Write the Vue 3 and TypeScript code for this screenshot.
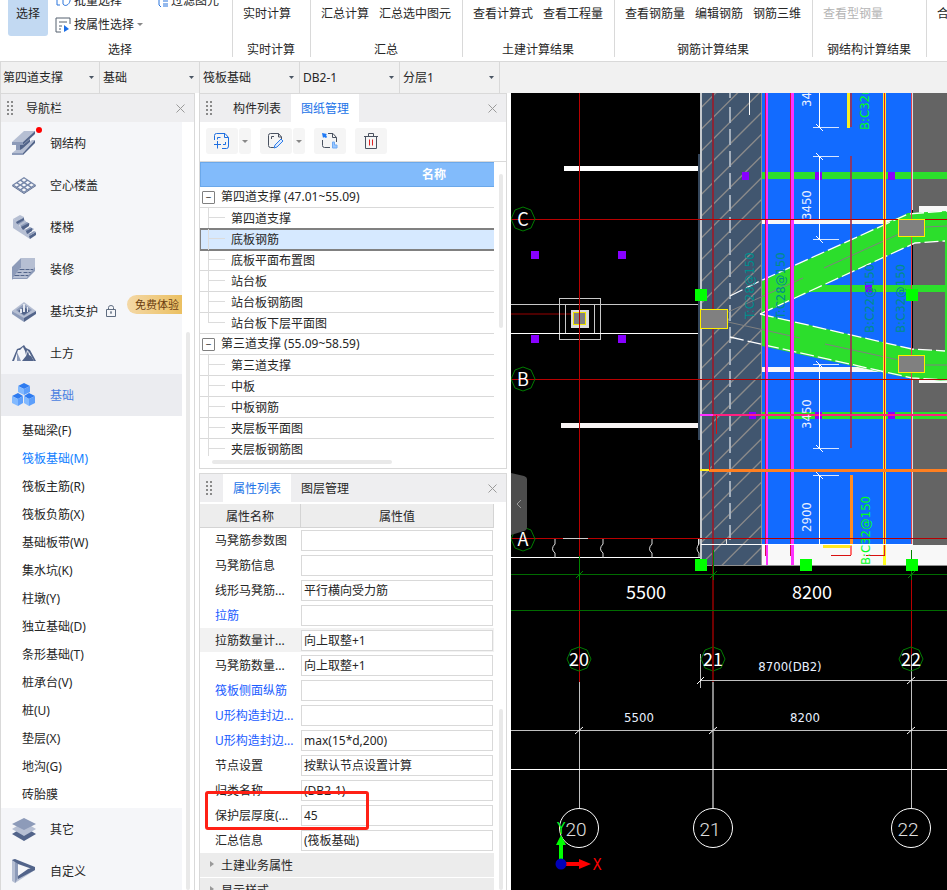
<script setup lang="ts">
import { ref } from 'vue'

type Shape = [fill: string, d: string]
interface NavItem { name: string; icon: Shape[]; dot?: boolean; locked?: boolean; badge?: string; active?: boolean }
interface Prop { name: string; value: string; blue?: boolean; shaded?: boolean }
type Seg = [x1: number, y1: number, x2: number, y2: number]
type Box = [x: number, y: number, w: number, h: number]

const L = '#b6bfd3'
const M = '#8d9bb9'
const D = '#52648a'

const toolGroups = [
  { title: '实时计算', tools: ['实时计算'], size: 'mid' },
  { title: '汇总', tools: ['汇总计算', '汇总选中图元'], size: '' },
  { title: '土建计算结果', tools: ['查看计算式', '查看工程量'], size: '' },
  { title: '钢筋计算结果', tools: ['查看钢筋量', '编辑钢筋', '钢筋三维'], size: '' },
  { title: '钢结构计算结果', tools: ['查看型钢量'], size: 'wide', disabled: true },
  { title: '', tools: ['合'], size: '' },
]

const filters = [
  { label: '楼层', value: '第四道支撑' },
  { label: '构件大类', value: '基础' },
  { label: '构件类型', value: '筏板基础' },
  { label: '构件', value: 'DB2-1' },
  { label: '分层', value: '分层1' },
]

/* Openings of the hollow slab: a 3 x 3 grid of small rhombs */
const openings = [0, 1, 2].flatMap(i => [0, 1, 2].map(j => {
  const cx = 12 + (i - j) * 3.7
  const cy = 7.1 + (i + j) * 2.45
  return `M${cx - 2.4} ${cy}L${cx} ${cy - 1.6}L${cx + 2.4} ${cy}L${cx} ${cy + 1.6}z`
})).join('')

const navTop: NavItem[] = [
  { name: '钢结构', dot: true, icon: [
    [L, 'M12 0H23L11 11H0z'], [M, 'M0 11H11V14H0z'], [D, 'M11 11L23 0V3L11 14z'], [M, 'M4 14H8V20H4z'],
    [D, 'M8 14H11L18 8V12L8 20z'], [L, 'M10 18L20 9H23L11 22H0L4 19H8z'], [M, 'M0 22H11V24H0z'], [D, 'M11 22L23 9V12L11 24z'] ] },
  { name: '空心楼盖', icon: [
    [D, 'M0 12L12 20L24 12V13L12 21L0 13z'], ['#7485a8', 'M12 4L24 12L12 20L0 12z'], ['#f5f6f9', openings] ] },
  { name: '楼梯', icon: [
    [L, 'M1 4L6 6L8 12L13 14L18 19V24L1 13z'], [L, 'M1 4L8 0L12 2L5 6zM5 8L12 4L16 9L10 12z'], [M, 'M5 6L12 2V6L6 10zM8 11L15 7L18 9L11 14zM13 15L18 12L22 14L16 19z'],
    [D, 'M4 7L12 3V5L5 9zM9 12L17 8V11L11 15zM14 16L20 13V16L15 19zM17 21L24 17V20L18 24z'], [M, 'M17 19L22 16L24 17L17 21z'] ] },
  { name: '装修', icon: [
    [M, 'M0 10L9 1V12L0 23z'], [L, 'M9 1H23V12H9z'], [L, 'M8 11H23L15 22H0z'],
    [D, 'M8 12H13L12 13H7zM14 12H18L17 13H13zM19 12H22L21 13H18zM6 15H10L9 16H5zM12 15H16L15 16H11zM17 15H20L19 16H16zM3 18H8L7 19H2zM9 18H13L12 19H8zM14 18H18L17 19H13z'], [M, 'M15 20L23 10V14L15 22zM0 21H15V22H0z'] ] },
  { name: '基坑支护', locked: true, badge: '免费体验', icon: [
    [L, 'M12 3L24 12L12 20L0 12z'], [M, 'M12 5L20 11L12 17L4 11z'], [D, 'M6 12L12 8L18 12L12 16z'], [M, 'M0 12L12 19V23L0 15z'], [D, 'M24 12L12 19V23L24 15z'],
    ['#e4e8f0', 'M11 5H13V13H11zM15 8H16V13H15zM8 10H10V14H8z'] ] },
  { name: '土方', icon: [
    [D, 'M0 20L5 8L8 7L12 4L14 7L18 9L24 20H22L17 11L15 9L14 14L13 10L11 6L8 9L6 9L2 20z'], [M, 'M5 11L9 20H5z'], [D, 'M16 10L17 14L19 15L22 20H10L14 15z'] ] },
  { name: '基础', active: true, icon: [
    ['#2e7bf0', 'M12 0L18 3L12 6L6 3z'], ['#82b9ff', 'M6 3L12 6V12L6 9z'], ['#5d9ffb', 'M18 3L12 6V12L18 9z'],
    ['#2e7bf0', 'M6 10L11 13L6 16L0 13zM17 10L23 13L17 16L12 13z'], ['#82b9ff', 'M0 13L6 16V23L0 20zM12 13L17 16V23L12 20z'], ['#5d9ffb', 'M11 13L6 16V23L11 20zM23 13L17 16V23L23 20z'] ] },
]
const navBottom: NavItem[] = [
  { name: '其它', icon: [
    [D, 'M0 17L5 14H19L24 17L12 24z'], [L, 'M0 12L5 9H19L24 12L12 19z'], [M, 'M12 1L24 7L12 13L0 7z'] ] },
  { name: '自定义', icon: [
    [L, 'M0 1L3 0L6 3V17L23 8V11L3 24L0 22z'], [M, 'M3 3L6 5V19L3 24z'], [D, 'M0 1L3 0L23 8V11L6 5zM6 17L16 10L20 9L23 11L6 20z'] ] },
]
const subItems = ['基础梁(F)', '筏板基础(M)', '筏板主筋(R)', '筏板负筋(X)', '基础板带(W)', '集水坑(K)', '柱墩(Y)', '独立基础(D)', '条形基础(T)', '桩承台(V)', '桩(U)', '垫层(X)', '地沟(G)', '砖胎膜']
const currentSub = ref('筏板基础(M)')

const drawings = [
  { name: '第四道支撑 (47.01~55.09)', children: ['第四道支撑', '底板钢筋', '底板平面布置图', '站台板', '站台板钢筋图', '站台板下层平面图'] },
  { name: '第三道支撑 (55.09~58.59)', children: ['第三道支撑', '中板', '中板钢筋', '夹层板平面图', '夹层板钢筋图'] },
]
const currentDrawing = ref('底板钢筋')

const props = ref<Prop[]>([
  { name: '马凳筋参数图', value: '' },
  { name: '马凳筋信息', value: '' },
  { name: '线形马凳筋...', value: '平行横向受力筋' },
  { name: '拉筋', value: '', blue: true },
  { name: '拉筋数量计...', value: '向上取整+1', shaded: true },
  { name: '马凳筋数量...', value: '向上取整+1' },
  { name: '筏板侧面纵筋', value: '', blue: true },
  { name: 'U形构造封边...', value: '', blue: true },
  { name: 'U形构造封边...', value: 'max(15*d,200)', blue: true },
  { name: '节点设置', value: '按默认节点设置计算' },
  { name: '归类名称', value: '(DB2-1)' },
  { name: '保护层厚度(...', value: '45' },
  { name: '汇总信息', value: '(筏板基础)' },
])
const propGroups = ['土建业务属性', '显示样式']

/* Plan geometry, in drawing units */
const hatch: Seg[] = Array.from({ length: 26 }, (_, i) => {
  const y = 86 + i * 21.75
  return [701, y, 762, y - 61]
})
const purple: Box[] = [[531, 251, 8, 8], [618, 251, 8, 8], [531, 335, 8, 8], [618, 335, 8, 8]]
const purpleOver: Box[] = [[742, 172, 7, 8], [815, 172, 7, 8], [888, 172, 7, 8], [785, 285, 7, 7], [865, 285, 7, 7], [945, 285, 7, 7], [749, 412, 7, 7], [815, 412, 7, 7], [888, 412, 7, 7]]
const columns: Box[] = [[700, 309, 28, 20], [898, 219, 27, 18], [898, 355, 27, 18]]
const handles: Box[] = [[695, 289, 12, 12], [906, 289, 12, 12], [695, 559, 12, 12], [800, 559, 12, 12], [906, 559, 12, 12]]
const dimRuns: Seg[] = [[819, 93, 819, 127], [819, 156, 819, 239], [819, 364, 819, 448], [819, 475, 819, 545]]
const dimTicks = [127, 156, 239, 364, 448, 475]
const vertDims = [{ x: 811, y: 107, t: '34' }, { x: 811, y: 220, t: '3450' }, { x: 811, y: 429, t: '3450' }, { x: 811, y: 532, t: '2900' }]
const rebar = [
  { x: 869, y: 130, t: 'B:C32@150', c: 'lime' },
  { x: 870, y: 565, t: 'B:C32@150', c: 'lime' },
  { x: 754, y: 319, t: 'T:C28@150', c: 'teal' },
  { x: 785, y: 319, t: 'T:C28@150', c: 'teal' },
  { x: 874, y: 333, t: 'B:C22@150', c: 'teal' },
  { x: 905, y: 333, t: 'B:C32@150', c: 'teal' },
]
const rowAxes = [{ y: 219, t: 'C' }, { y: 379, t: 'B' }, { y: 539, t: 'A' }]
const colAxes = [{ x: 579, t: '20' }, { x: 713, t: '21' }, { x: 911, t: '22' }]
function octagon(cx: number, cy: number): string {
  return [[0, -12], [8, -9], [12, 0], [8, 9], [0, 12], [-8, 9], [-12, 0], [-8, -9]].map(([x, y]) => `${cx + x},${cy + y}`).join(' ')
}
</script>

<template>
  <div class="app">
    <header class="ribbon">
      <section class="group select-group">
        <div class="tools">
          <button class="big chosen">选择</button>
          <div class="small-tools">
            <button class="small">
              <svg width="16" height="16" viewBox="0 0 16 16" fill="none" stroke="#2b74dc"><path d="M8 3H2V12H5M8 3C12 1 16 4 15 8S10 14 8 11V7" /></svg>批量选择
            </button>
            <button class="small">
              <svg width="16" height="16" viewBox="0 0 16 16" fill="none" stroke="#55606e"><path d="M15 7V1H1V15H6M4 5H12M4 9H7M4 12H6" /><path d="M9 8L14 12L9 15z" fill="#1c6fe8" stroke="none" /></svg>按属性选择<i class="caret"></i>
            </button>
          </div>
          <div class="small-tools second">
            <button class="small">
              <svg width="10" height="16" viewBox="0 0 10 16" fill="none" stroke="#2b74dc"><path d="M1 2V12L3 14M5 5H10M5 8H10M5 11H10M5 13H10" /></svg>过滤图元
            </button>
            <span class="small"></span>
          </div>
        </div>
        <div class="title">选择</div>
      </section>
      <section v-for="g in toolGroups" :key="g.title" class="group" :class="g.size">
        <div class="tools">
          <button v-for="t in g.tools" :key="t" class="big" :disabled="g.disabled">{{ t }}</button>
        </div>
        <div class="title">{{ g.title }}</div>
      </section>
    </header>

    <div class="filters">
      <div v-for="f in filters" :key="f.label" class="filter">
        <select :aria-label="f.label"><option>{{ f.value }}</option></select>
        <svg class="arrow" width="5" height="3" viewBox="0 0 5 3"><path d="M0 0H5L2.500 3z" fill="#4a5563" /></svg>
      </div>
    </div>

    <main class="work">
      <nav class="panel nav">
        <div class="head">
          <svg class="grip" width="6" height="14"><path d="M0 1H2M4 1H6M0 5H2M4 5H6M0 9H2M4 9H6M0 13H2M4 13H6" stroke="#8a8a8a" stroke-width="2" /></svg>
          <span class="caption">导航栏</span>
          <button class="close" aria-label="关闭"><svg width="9" height="9" viewBox="0 0 9 9"><path d="M.5 .5L8.500 8.500M8.500 .5L.5 8.500" stroke="#9a9a9a" /></svg></button>
        </div>
        <div class="nav-body">
          <div class="nav-list">
            <a v-for="n in navTop" :key="n.name" href="#" class="nav-item" :class="{ active: n.active }">
              <svg width="24" height="24" viewBox="0 0 24 24"><path v-for="(s, i) in n.icon" :key="i" :fill="s[0]" :d="s[1]" /></svg>
              <i v-if="n.dot" class="dot"></i>
              <span>{{ n.name }}</span>
              <svg v-if="n.locked" class="lock" width="10" height="12" viewBox="0 0 10 12" fill="none" stroke="#5f6c80"><path d="M.5 4.500H9.500V11.500H.5zM2.500 4.500V2.500Q2.500 .5 5 .5T7.500 2.500V4.500M4 7H6M5 7V9" /></svg>
              <em v-if="n.badge" class="badge">{{ n.badge }}</em>
            </a>
            <a v-for="s in subItems" :key="s" href="#" class="sub-item" :class="{ current: s === currentSub }" @click.prevent="currentSub = s">{{ s }}</a>
            <a v-for="n in navBottom" :key="n.name" href="#" class="nav-item">
              <svg width="24" height="24" viewBox="0 0 24 24"><path v-for="(s, i) in n.icon" :key="i" :fill="s[0]" :d="s[1]" /></svg>
              <span>{{ n.name }}</span>
            </a>
          </div>
          <i class="thumb nav-thumb"></i>
        </div>
      </nav>

      <div class="docks">
        <section class="panel drawings">
          <div class="head">
            <svg class="grip" width="6" height="14"><path d="M0 1H2M4 1H6M0 5H2M4 5H6M0 9H2M4 9H6M0 13H2M4 13H6" stroke="#8a8a8a" stroke-width="2" /></svg>
            <button class="tab">构件列表</button>
            <button class="tab on">图纸管理</button>
            <button class="close" aria-label="关闭"><svg width="9" height="9" viewBox="0 0 9 9"><path d="M.5 .5L8.500 8.500M8.500 .5L.5 8.500" stroke="#9a9a9a" /></svg></button>
          </div>
          <div class="toolbar">
            <div class="split">
              <button class="tool" aria-label="添加图纸"><svg width="16" height="16" viewBox="0 0 16 16" fill="none" stroke="#1f6fe0"><path d="M.5 7V2.500Q.5 .5 2.500 .5H11L14.500 4.500V13Q14.500 15.500 12.500 15.500H8M10.500 .5V4.500H14.500M3.500 6.500V4.500H6.500M11.500 9V11.500H9M3.500 8V15.500M0 11.500H7" /></svg></button>
              <button class="drop" aria-label="更多"><i class="caret"></i></button>
            </div>
            <div class="split">
              <button class="tool" aria-label="编辑图纸"><svg width="16" height="16" viewBox="0 0 16 16" fill="none" stroke="#4a5260"><path d="M6 14.500H2.500Q.5 14.500 .5 12.500V2.500Q.5 .5 2.500 .5H10.500L13.500 4V6M10.500 .5V4H13.500M3.500 6V3.500H6" /><path d="M7 12L13 6L15 8L9 14L6 15z" stroke="#2f7de8" fill="#dceaff" /></svg></button>
              <button class="drop" aria-label="更多"><i class="caret"></i></button>
            </div>
            <button class="tool" aria-label="定位图纸"><svg width="16" height="16" viewBox="0 0 16 16" fill="none" stroke="#4a5260"><path d="M.5 7V12.500Q.5 14.500 2.500 14.500H8M6 .5H11L14.500 4.500V9M10.500 .5V4.500H14.500" /><path d="M0 0L5 1L4 2L5 4L4 5L2 4L1 5z" fill="#1f7af5" stroke="none" /><path d="M10.500 9V15H15V12H12.500V9z" fill="#9cc8ff" stroke="#6fabf5" /></svg></button>
            <button class="tool" aria-label="删除"><svg width="14" height="16" viewBox="0 0 14 16" fill="none" stroke="#4a5260"><path d="M0 3.500H14M4.500 3V.5H9.500V3M1.500 4V15.500H12.500V4" /><path d="M5.500 6.500V12.500M8.500 6.500V12.500" stroke="#e02222" /></svg></button>
          </div>
          <div class="tree-area">
            <div class="tree-clip">
              <div class="tree-head"><span>名称</span></div>
              <ul class="tree">
                <li v-for="d in drawings" :key="d.name">
                  <div class="row root"><button class="fold" aria-label="折叠">−</button>{{ d.name }}</div>
                  <ul>
                    <li v-for="c in d.children" :key="c" class="row leaf" :class="{ picked: c === currentDrawing }" @click="currentDrawing = c">{{ c }}</li>
                  </ul>
                </li>
              </ul>
            </div>
            <i class="thumb tree-thumb"></i>
          </div>
          <i class="h-thumb"></i>
        </section>

        <section class="panel props">
          <div class="head">
            <svg class="grip" width="6" height="14"><path d="M0 1H2M4 1H6M0 5H2M4 5H6M0 9H2M4 9H6M0 13H2M4 13H6" stroke="#8a8a8a" stroke-width="2" /></svg>
            <button class="tab on">属性列表</button>
            <button class="tab">图层管理</button>
            <button class="close" aria-label="关闭"><svg width="9" height="9" viewBox="0 0 9 9"><path d="M.5 .5L8.500 8.500M8.500 .5L.5 8.500" stroke="#9a9a9a" /></svg></button>
          </div>
          <div class="prop-area">
            <table>
              <colgroup><col class="name-col"><col></colgroup>
              <thead><tr><th>属性名称</th><th>属性值</th></tr></thead>
              <tbody>
                <tr v-for="(p, i) in props" :key="i" :class="{ shaded: p.shaded, blue: p.blue }">
                  <td><label :for="`prop-${i}`">{{ p.name }}</label></td>
                  <td><input :id="`prop-${i}`" v-model="p.value" type="text"></td>
                </tr>
                <tr v-for="g in propGroups" :key="g" class="fold-row">
                  <td colspan="2"><svg width="4" height="6" viewBox="0 0 4 6"><path d="M0 0L4 3L0 6z" fill="#999" /></svg>{{ g }}</td>
                </tr>
              </tbody>
            </table>
            <i class="thumb prop-thumb"></i>
            <i class="marker"></i>
          </div>
        </section>
      </div>

      <div class="viewport">
        <svg class="plan" viewBox="511 93 436 797" preserveAspectRatio="xMinYMin slice">
          <rect x="511" y="93" width="436" height="797" fill="#000" />
          <g shape-rendering="crispEdges">
            <rect x="564" y="166" width="136" height="5" fill="#fff" />
            <rect x="561" y="423" width="138" height="5" fill="#f8f4f4" />
            <rect v-for="(b, i) in purple" :key="i" :x="b[0]" :y="b[1]" :width="b[2]" :height="b[3]" fill="#8800ff" />
            <path d="M511 314H571" stroke="#4c0000" stroke-width="2" />
            <path d="M511 304.500H700M559.500 298.500H600.500V339.500H559.500zM565.500 304V333M594.500 304V333" stroke="#c8c8c8" fill="none" />
            <path d="M511 333.500H700M511 557.500H700" stroke="#fff" />
            <rect x="571" y="310" width="18" height="18" fill="#ddd" />
            <rect x="573.500" y="312.500" width="12" height="12" fill="#808080" stroke="#f0e600" />

            <rect x="698" y="154" width="3" height="286" fill="#34465b" />
            <rect x="701" y="93" width="61" height="472" fill="#41566f" />
            <rect x="762" y="93" width="150" height="452" fill="#126bff" />
            <rect x="913" y="93" width="34" height="452" fill="#646464" />
            <rect x="762" y="545" width="185" height="20" fill="#f8f8f8" />
          </g>
          <path v-for="(h, i) in hatch" :key="i" :d="`M${h[0]} ${h[1]}L${h[2]} ${h[3]}`" stroke="#8a8a8a" stroke-width="1.300" clip-path="url(#wallClip)" />
          <clipPath id="wallClip"><rect x="701" y="93" width="61" height="472" /></clipPath>
          <g shape-rendering="crispEdges">
            <path d="M701 93V565" stroke="#c4c8cc" stroke-width="2" />
            <path d="M761.500 93V565M701 565.500H947" stroke="#909090" />
            <path d="M713 93V565" stroke="#8a2536" stroke-width="2" />
            <path d="M730 107V540M730 93V98" stroke="#a4afbc" stroke-width="2" stroke-dasharray="16 6" />
            <path d="M749.500 93V115" stroke="#fff" />
            <rect x="762" y="172" width="185" height="7" fill="#2cde2c" />
            <rect x="762" y="285" width="185" height="7" fill="#2cde2c" />
            <rect x="762" y="412" width="185" height="7" fill="#2cde2c" />
            <rect x="762" y="220" width="150" height="4" fill="#f8f8f8" />
            <rect x="762" y="367" width="118" height="5" fill="#f8f8f8" />
            <rect x="919" y="206" width="28" height="7" fill="#f8f8f8" />
            <rect x="919" y="378" width="28" height="5" fill="#f8f8f8" />
            <rect v-for="(b, i) in purpleOver" :key="i" :x="b[0]" :y="b[1]" :width="b[2]" :height="b[3]" fill="#8800ff" />
          </g>
          <path d="M762 281L908 213L947 211V241L915 243L762 314z" fill="#2cde2c" />
          <path d="M762 314L912 349L947 351V381L908 378L762 346z" fill="#2cde2c" />
          <path d="M946 240V352" stroke="#2cde2c" stroke-width="2" />
          <path d="M728 312L803 278M824 268L899 234M728 322L800 338M825 344L899 360M925 227L947 226M925 365H947" stroke="#808080" fill="none" />
          <path d="M730 296L758 282L908 214L947 211M760 314L915 243L945 241M760 314L912 349L945 351M730 337L765 345L912 378L947 380" stroke="#fff" stroke-width="1.300" fill="none" stroke-dasharray="14 4" />

          <g shape-rendering="crispEdges">
            <path d="M911.500 93V545" stroke="#e04050" />
            <path d="M912.500 93V210M912.500 380V545" stroke="#ddd" />
            <path d="M765.500 93V556" stroke="#d0104a" />
            <path d="M767 93V565" stroke="#ff30ff" stroke-width="2" />
            <path d="M790.500 93V556" stroke="#d0104a" />
            <path d="M792.500 93V565" stroke="#ff30ff" stroke-width="3" />
            <path d="M848.500 93V128" stroke="#f8f020" stroke-width="3" />
            <path d="M851 93V127M851 156V448" stroke="#a03050" stroke-opacity="0.850" stroke-width="2" />
            <path d="M884.500 93V556" stroke="#ffe92a" stroke-width="3" />
            <path d="M884.500 93V556" stroke="#e02020" />
            <path d="M884.500 556V565" stroke="#ffff20" stroke-width="3" />
            <path d="M700 415H713" stroke="#ff30ff" stroke-width="2" />
            <path d="M713 415H947" stroke="#ff1f80" stroke-width="2" />
            <path d="M700 470H709" stroke="#fff020" stroke-width="2" />
            <path d="M709 470.500H947" stroke="#ff7f20" stroke-width="3" />
            <path d="M851.500 475V545" stroke="#ff8c20" stroke-width="3" />
            <path d="M823 546.500H852" stroke="#ffe820" stroke-width="3" />
            <path d="M851 546V555" stroke="#ff7070" stroke-width="2" />
            <path d="M831 555.500H851M866 555.500H885M716.500 415V434M709.500 452V470" stroke="#d81010" fill="none" />
            <path d="M701 544.500H913" stroke="#fff" />
            <path d="M698.500 539V545M710 538.500H726V545" stroke="#e8e8e8" fill="none" />
            <path v-for="(r, i) in dimRuns" :key="i" :d="`M${r[0]}.5 ${r[1]}V${r[3]}`" stroke="#fff" />
            <path v-for="y in dimTicks" :key="y" :d="`M813 ${y}.5H839`" stroke="#d8e6ff" />
          </g>
          <path v-for="y in dimTicks" :key="y" :d="`M816 ${y - 3}L823 ${y + 4}`" stroke="#fff" />
          <text v-for="(v, i) in vertDims" :key="i" class="cad white" :transform="`translate(${v.x} ${v.y}) rotate(-90)`">{{ v.t }}</text>
          <text v-for="(r, i) in rebar" :key="i" class="cad" :class="r.c" :transform="`translate(${r.x} ${r.y}) rotate(-90)`">{{ r.t }}</text>

          <path d="M555 539V544Q550 549 555 553V558M603 539V544Q598 549 603 553V558M652 539V544Q647 549 652 553V558M699 539V544Q695 549 699 553V558" stroke="#ddd" fill="none" />

          <g shape-rendering="crispEdges">
            <path d="M511 219.500H947M511 379.500H947M511 538.500H947" stroke="#b80000" />
            <path d="M579.500 93V682M911.500 565V655" stroke="#b80000" />
            <path d="M713 565V682" stroke="#700000" stroke-width="2" />
            <path d="M563 538.500H588" stroke="#ccc" />
            <path d="M511 574.500H947M511 610.500H947" stroke="#006c00" />
            <path d="M579.500 556V580M713.500 550V580M911.500 550V580" stroke="#008400" />
            <path d="M579.500 682V808M911.500 655V808M701 680.500H947M700.500 654V688M511 730.500H947" stroke="#c0c0c0" />
            <path d="M713 682V808" stroke="#888" stroke-width="2" />
            <path d="M511 769.500H947" stroke="#fff" />
            <g fill="#808080" stroke="#fff000">
              <rect v-for="(b, i) in columns" :key="i" :x="b[0] + 0.5" :y="b[1] + 0.5" :width="b[2] - 1" :height="b[3] - 1" />
            </g>
            <rect v-for="(b, i) in handles" :key="i" :x="b[0]" :y="b[1]" :width="b[2]" :height="b[3]" fill="#00ff00" />
          </g>

          <g v-for="a in rowAxes" :key="a.t">
            <polygon :points="octagon(523, a.y)" fill="none" stroke="#007c00" />
            <text class="mark" x="523" :y="a.y + 7">{{ a.t }}</text>
          </g>
          <g v-for="a in colAxes" :key="a.t">
            <path :d="`M${a.x - 3} 578L${a.x + 4} 571`" stroke="#008400" />
            <path :d="`M${a.x - 4} 734L${a.x + 4} 727`" stroke="#fff" />
            <polygon :points="octagon(a.x, 659)" fill="none" stroke="#007c00" />
            <text class="mark" :x="a.x" y="666">{{ a.t }}</text>
            <circle :cx="a.x" cy="828" r="19.500" fill="none" stroke="#fff" />
            <text class="cad large" :x="a.x - 3" y="836">{{ a.t }}</text>
          </g>
          <path d="M713 647V671" stroke="#800000" stroke-width="2" />
          <path d="M697 684L704 677M907 684L915 677" stroke="#fff" />
          <text class="mark" x="646" y="599">5500</text>
          <text class="mark" x="812" y="599">8200</text>
          <text class="cad white mid" x="790" y="671">8700(DB2)</text>
          <text class="cad white mid" x="639" y="722">5500</text>
          <text class="cad white mid" x="805" y="722">8200</text>

          <path d="M559 859V845H556L561 835L566 845H563V859z" fill="#00ff00" />
          <path d="M566 862H579V859L591 864L579 869V866H566z" fill="#ff0000" />
          <circle cx="561" cy="864" r="5.500" fill="#0000b8" />
          <text class="cad lime mid axis" x="561" y="834">Y</text>
          <text class="cad red mid axis" x="597" y="870">X</text>
        </svg>
        <button class="collapse" aria-label="收起">
          <svg width="16" height="62" viewBox="0 0 16 62"><path d="M0 0L13 3Q16 4 16 6V54Q16 57 13 58L0 62z" fill="#4d4d4d" /><path d="M10 27L6 31L10 35" stroke="#9a9a9a" fill="none" /></svg>
        </button>
      </div>
    </main>
  </div>
</template>

<style>
body { margin: 0; overflow: hidden; }
</style>

<style scoped>
* { box-sizing: border-box; }
.app {
  display: flex; flex-direction: column; height: 100vh; overflow: hidden; background: #fff; color: #262626;
  font: 12px/16px "Noto Sans", "Noto Sans CJK SC", sans-serif;
}
button, select, input { font: inherit; color: inherit; border: 0; padding: 0; margin: 0; background: none; border-radius: 0; }
a { color: inherit; text-decoration: none; }
i, em { font-style: normal; }
svg { display: block; flex: none; }
ul { list-style: none; margin: 0; padding: 0; }
.caret { flex: none; border: 3px solid transparent; border-top-color: #888; border-bottom: 0; }

.ribbon { display: flex; align-items: flex-end; flex: none; height: 62px; padding-bottom: 4px; border-bottom: 1px solid #d9d9d9; overflow: hidden; white-space: nowrap; }
.group { flex: none; border-right: 1px solid #d9d9d9; padding: 0 11px 0 10px; }
.select-group { width: 233px; padding: 0 0 0 8px; }
.group.mid { min-width: 78px; }
.group.wide { min-width: 114px; }
.group:last-child { border-right: 0; }
.tools { display: flex; gap: 10px; height: 60px; }
.big { display: flex; align-items: flex-end; justify-content: center; padding-bottom: 14px; }
.big:disabled { color: #b4b4b4; }
.chosen { width: 40px; background: #c2d9f2; border-radius: 3px; }
.title { height: 21px; padding-top: 6px; text-align: center; }
.small-tools { display: flex; flex-direction: column; justify-content: flex-end; margin-left: -3px; }
.small-tools.second { margin-left: 5px; }
.small { display: flex; align-items: center; gap: 3px; height: 24px; padding-top: 1px; }

.filters { display: flex; flex: none; height: 31px; background: #f1f1f1; border-left: 1px solid #d9d9d9; }
.filter { position: relative; width: 100px; border-right: 1px solid #d9d9d9; }
.filter:first-child { width: 99px; }
.filter select { appearance: none; width: 100%; height: 100%; padding-left: 3px; outline: 0; }
.filter:first-child select { padding-left: 2px; }
.arrow { position: absolute; right: 5px; top: 14px; pointer-events: none; }

.work { display: flex; flex: 1; min-height: 0; }
.panel { border: 1px solid #d9d9d9; background: #fff; display: flex; flex-direction: column; }
.nav { flex: none; width: 195px; border-bottom: 0; }
.head { display: flex; align-items: center; flex: none; height: 28px; background: #eeeef0; padding-left: 6px; }
.caption { margin-left: 13px; padding-top: 2px; }
.close { margin-left: auto; margin-right: 9px; }
.tab { height: 28px; padding: 2px 10px 0; }
.grip + .tab { margin-left: 11px; }
.tab.on { background: #fff; color: #1a73e8; }

.nav-body { position: relative; flex: 1; min-height: 0; overflow: hidden; }
.nav-list { margin-right: 12px; }
.nav-item { position: relative; display: flex; align-items: center; height: 42px; padding-left: 11px; background: #f5f6f9; }
.nav-item span { margin-left: 14px; padding-top: 2px; }
.nav-item.active { background: #ebecf0; color: #4a7fe0; }
.dot { position: absolute; left: 35px; top: 5px; width: 6px; height: 6px; border-radius: 50%; background: #f00; }
.lock { margin-left: 8px; }
.badge { position: absolute; right: 0; top: 5px; height: 19px; padding: 1px 3px 0 8px; border-radius: 10px 0 0 10px; background: linear-gradient(90deg, #f4d8a6, #ebc062); color: #6b3d10; font-size: 11px; line-height: 18px; }
.sub-item { display: flex; align-items: center; height: 28px; padding: 2px 0 0 21px; }
.sub-item.current { color: #0f80ff; }
.thumb { position: absolute; width: 4px; border-radius: 2px; background: #e9e9e9; }
.nav-thumb { right: 4px; top: 210px; bottom: 0; }

.docks { display: flex; flex-direction: column; flex: none; width: 308px; margin: 0 4px; gap: 4px; }
.drawings { flex: none; }
.toolbar { display: flex; gap: 9px; padding: 6px; height: 40px; border-bottom: 1px solid #d9d9d9; }
.split { display: flex; gap: 1px; }
.tool, .drop { display: flex; align-items: center; justify-content: center; height: 26px; background: #f5f5f5; border-radius: 3px; }
.tool { width: 32px; padding-right: 1px; }
.drop { width: 12px; }
.tree-area { position: relative; height: 294px; }
.tree-clip { height: 294px; margin-right: 12px; overflow: hidden; }
.tree-head { height: 25px; border: 1px solid #6ba8ea; border-right: 0; background: #82bbfb; color: #fff; font-weight: 700; line-height: 24px; }
.tree-head span { display: block; width: 466px; text-align: center; }
.row { position: relative; height: 21px; line-height: 22px; border-bottom: 1px solid #d9d9d9; }
.root { display: flex; align-items: center; gap: 6px; padding-left: 2px; }
.fold { width: 13px; height: 13px; border: 1px solid #808080; border-radius: 1px; font-size: 10px; line-height: 10px; background: #fff; }
.leaf { padding-left: 31px; }
.leaf::before { content: ""; position: absolute; left: 8px; top: 0; bottom: -1px; border-left: 1px solid #dcdcdc; }
.leaf:last-child::before { bottom: 10px; }
.tree > li:last-child .leaf:last-child::before { bottom: 0; }
.leaf::after { content: ""; position: absolute; left: 8px; width: 17px; top: 9px; border-top: 1px solid #dcdcdc; }
.picked { z-index: 1; background: #d6e9ff; border-color: #808080; box-shadow: 0 -1px #808080, 0 1px #808080, inset 0 1px #808080, inset 1px 0 #808080; }
.tree-thumb { right: 3px; top: 12px; height: 154px; }
.h-thumb { width: 180px; height: 4px; margin: 4px 0 4px 12px; border-radius: 2px; background: #e9e9e9; }

.props { flex: 1; min-height: 0; border-bottom: 0; }
.prop-area { position: relative; flex: 1; min-height: 0; margin-top: 2px; margin-right: 12px; }
table { width: 100%; table-layout: fixed; border-collapse: separate; border-spacing: 0; }
.name-col { width: 101px; }
th { height: 24px; padding: 2px 0 0; background: #ededed; border: solid #d4d4d4; border-width: 0 1px 1px 0; font-weight: 400; }
td { height: 25px; padding: 0; border-bottom: 1px solid #fff; white-space: nowrap; }
td label { display: block; padding: 2px 0 0 15px; }
.blue label { color: #1a5cff; }
.shaded td { background: #f2f2f2; }
td input { display: block; width: calc(100% - 1px); height: 21px; padding: 0 2px; border: 1px solid #d9d9d9; background: #fff; outline: 0; }
.fold-row td { background: #ececec; padding: 2px 0 0 10px; }
.fold-row svg { display: inline-block; margin-right: 7px; vertical-align: 3px; }
.prop-thumb { right: -9px; top: 205px; bottom: 0; }
.marker { position: absolute; left: 5px; top: 287px; width: 164px; height: 39px; border: 3px solid #ff2015; border-radius: 3px; pointer-events: none; }

.viewport { position: relative; flex: 1; min-width: 0; overflow: hidden; background: #000; }
.plan { width: 100%; height: 100%; }
.collapse { position: absolute; left: 0; top: 380px; }
.cad { font: 13px "Liberation Sans Narrow", "DejaVu Sans Condensed", sans-serif; }
.mid { text-anchor: middle; }
.white { fill: #e8f0ff; }
.lime { fill: #00ff20; }
.teal { fill: #008c8c; }
.red { fill: #f00; }
.axis { font-size: 15px; }
.large { font: 300 19px Roboto, sans-serif; fill: #e0e0e0; text-anchor: middle; }
.mark { font: 18px "Noto Sans CJK SC", sans-serif; fill: #fff; text-anchor: middle; }
</style>
